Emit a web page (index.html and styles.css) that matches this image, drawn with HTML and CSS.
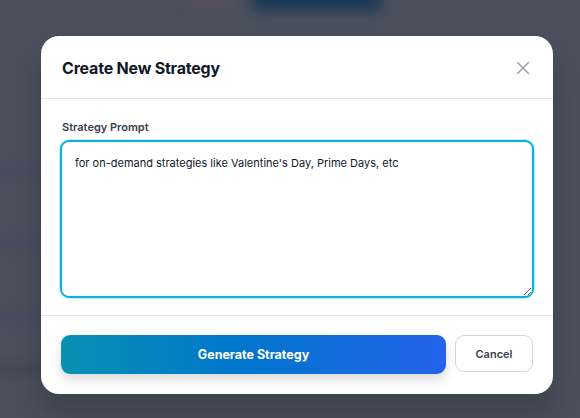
FILE: index.html
```html
<!DOCTYPE html>
<html>
<head>
<meta charset="utf-8">
<link rel="stylesheet" href="styles.css">
</head>
<body>
<div class="backdrop">
  <div class="bg-blob blob-red"></div>
  <div class="bg-blob blob-blue"></div>
  <div class="bg-band band-1"></div>
  <div class="bg-band band-2"></div>
  <div class="bg-band band-3"></div>
  <div class="bg-band band-4"></div>
</div>
<div class="stage">
  <div class="modal">
    <div class="modal-header">
      <h2 class="modal-title">Create New Strategy</h2>
      <button class="close-btn" aria-label="Close">
        <svg width="14" height="14" viewBox="0 0 14 14"><path d="M1.5 1.5 L12.5 12.5 M12.5 1.5 L1.5 12.5" stroke="#9ca3af" stroke-width="1.6" stroke-linecap="round" fill="none"/></svg>
      </button>
    </div>
    <div class="modal-body">
      <label class="field-label">Strategy Prompt</label>
      <textarea class="prompt">for on-demand strategies like Valentine's Day, Prime Days, etc</textarea>
    </div>
    <div class="modal-footer">
      <button class="btn-primary">Generate Strategy</button>
      <button class="btn-cancel">Cancel</button>
    </div>
  </div>
</div>
</body>
</html>
```
FILE: styles.css
```css
* { box-sizing: border-box; }
html, body {
  margin: 0;
  padding: 0;
  width: 580px;
  height: 418px;
  overflow: hidden;
}
body {
  background: #4a505c;
  font-family: Inter, "Noto Sans", "Liberation Sans", sans-serif;
  position: relative;
}
.backdrop {
  position: absolute;
  inset: 0;
  overflow: hidden;
}
.bg-blob {
  position: absolute;
  filter: blur(6px);
  border-radius: 8px;
}
.blob-red {
  left: 185px; top: -10px; width: 50px; height: 20px;
  background: #534f5a;
}
.blob-blue {
  left: 252px; top: -14px; width: 130px; height: 26px;
  background: #1e3a56;
}
.bg-band {
  position: absolute;
  left: -10px;
  width: 60px;
  height: 10px;
  background: #4d4a62;
  filter: blur(5px);
}
.band-1 { top: 165px; }
.band-2 { top: 238px; }
.band-3 { top: 312px; }
.band-4 { top: 365px; background: #454854; }
.stage {
  position: relative;
  padding: 36px 0 0 41px;
}
.modal {
  width: 512px;
  background: #ffffff;
  border-radius: 18px;
  box-shadow: 0 20px 30px rgba(0,0,0,0.18);
  overflow: hidden;
}
.modal-header {
  display: flex;
  align-items: center;
  justify-content: space-between;
  padding: 20px 20px 19px 21px;
  border-bottom: 1px solid #e5e7eb;
  height: 63px;
}
.modal-title {
  margin: 0;
  font-size: 16px;
  font-weight: 700;
  color: #111827;
  letter-spacing: -0.2px;
}
.close-btn {
  background: none;
  border: 0;
  padding: 0;
  width: 14px;
  height: 14px;
  display: flex;
  margin-right: 3px;
  margin-top: 1px;
}
.modal-body {
  display: flex;
  flex-direction: column;
  padding: 20px 19px 17px 19px;
  border-bottom: 1px solid #e5e7eb;
}
.field-label {
  font-size: 11px;
  font-weight: 600;
  color: #374151;
  line-height: 16px;
  margin-bottom: 5px;
  padding-left: 2px;
}
.prompt {
  display: block;
  width: 474px;
  height: 158px;
  border: 2px solid #06b6d4;
  border-radius: 9px;
  padding: 13px 13px;
  font-family: Inter, "Noto Sans", "Liberation Sans", sans-serif;
  font-size: 11px;
  line-height: 16px;
  color: #111827;
  outline: none;
  resize: vertical;
  box-shadow: 0 0 0 1px rgba(6,182,212,0.25);
}
.modal-footer {
  display: flex;
  gap: 9px;
  padding: 19px 20px 20px 20px;
}
.btn-primary {
  width: 385px;
  height: 39px;
  border: 0;
  border-radius: 9px;
  background: linear-gradient(90deg, #0891b2 0%, #0077cc 45%, #2563eb 100%);
  color: #ffffff;
  font-family: Inter, "Noto Sans", "Liberation Sans", sans-serif;
  font-size: 12.5px;
  font-weight: 700;
  box-shadow: 0 6px 12px rgba(0,0,0,0.14);
}
.btn-cancel {
  width: 78px;
  height: 37px;
  border: 1px solid #d1d5db;
  border-radius: 9px;
  background: #ffffff;
  color: #374151;
  font-family: Inter, "Noto Sans", "Liberation Sans", sans-serif;
  font-size: 11px;
  font-weight: 600;
}
```
